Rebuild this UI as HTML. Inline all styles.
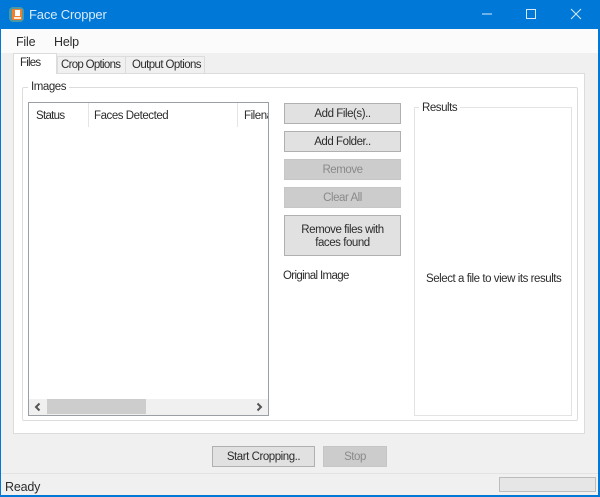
<!DOCTYPE html>
<html>
<head>
<meta charset="utf-8">
<style>
html,body{margin:0;padding:0;}
body{width:600px;height:497px;position:relative;overflow:hidden;background:#f0f0f0;font-family:"Liberation Sans",sans-serif;font-size:11.5px;letter-spacing:-.45px;color:#2c2c2c;filter:blur(.3px);}
div{position:absolute;box-sizing:border-box;}
.t{white-space:nowrap;line-height:14px;}
.btn{background:#e1e1e1;border:1px solid #b0b0b0;text-align:center;color:#2c2c2c;white-space:nowrap;}
.dis{background:#ccc;border:1px solid #c6c6c6;color:#8a8a8a;}
.m{font-size:12.5px;letter-spacing:-.2px;}
</style>
</head>
<body>
<div style="left:0;top:0;width:600px;height:29px;background:#0078d7"></div>
<div style="left:0;top:0;width:1px;height:497px;background:#0078d7"></div>
<div style="left:598px;top:0;width:2px;height:497px;background:#0078d7"></div>
<div style="left:0;top:495px;width:600px;height:2px;background:#0078d7"></div>

<svg style="position:absolute;left:8px;top:6px" width="18" height="18" viewBox="0 0 18 18">
<rect x="1" y="1" width="15" height="15" rx="4" fill="#4a98a6"/>
<rect x="4" y="3" width="10" height="11" rx="1" fill="#f08030"/>
<rect x="7" y="4" width="5" height="6" fill="#fff"/>
<rect x="6" y="11" width="7" height="2" fill="#fde8d8"/>
</svg>
<div class="t" style="left:29px;top:7px;font-size:13px;line-height:16px;color:#d8ebfa;letter-spacing:-.15px">Face Cropper</div>

<svg style="position:absolute;left:480px;top:6px" width="110" height="16" viewBox="0 0 110 16" fill="none" stroke="#d8eafa" stroke-width="1">
<path d="M2 8h10"/>
<rect x="46.5" y="3.5" width="9" height="9"/>
<path d="M91 3l10 10M101 3L91 13"/>
</svg>

<div style="left:1px;top:29px;width:597px;height:24px;background:#fbfbfb"></div>
<div class="t m" style="left:16px;top:35px">File</div>
<div class="t m" style="left:54px;top:35px">Help</div>

<div style="left:13px;top:73px;width:572px;height:361px;background:#fff;border:1px solid #dcdcdc"></div>
<div style="left:57px;top:56px;width:69px;height:18px;background:#f0f0f0;border:1px solid #dcdcdc"></div>
<div style="left:125px;top:56px;width:80px;height:18px;background:#f0f0f0;border:1px solid #dcdcdc"></div>
<div style="left:13px;top:53px;width:44px;height:21px;background:#fff;border:1px solid #dcdcdc;border-bottom:0"></div>
<div class="t" style="left:20px;top:56px;letter-spacing:-.8px">Files</div>
<div class="t" style="left:61px;top:58px;letter-spacing:-.7px">Crop Options</div>
<div class="t" style="left:132px;top:58px;letter-spacing:-.6px">Output Options</div>

<div style="left:22px;top:87px;width:556px;height:334px;border:1px solid #dcdcdc;border-radius:2px"></div>
<div class="t" style="left:28px;top:80px;background:#fff;padding:0 3px">Images</div>

<div style="left:28px;top:102px;width:241px;height:314px;background:#fff;border:1px solid #9a9ea5;overflow:hidden">
<div style="left:59px;top:0;width:1px;height:24px;background:#e5e5e5"></div>
<div style="left:208px;top:0;width:1px;height:24px;background:#e5e5e5"></div>
<div class="t" style="left:7px;top:6px;letter-spacing:-.7px">Status</div>
<div class="t" style="left:65px;top:6px">Faces Detected</div>
<div class="t" style="left:215px;top:6px">Filename</div>
<div style="left:0;top:296px;width:239px;height:16px;background:#f0f0f0"></div>
<div style="left:18px;top:296px;width:99px;height:15px;background:#cdcdcd"></div>
<svg style="position:absolute;left:4px;top:299px" width="232" height="10" viewBox="0 0 232 10" fill="none" stroke="#555" stroke-width="2">
<path d="M6.5 1.5L3 5L6.5 8.5"/><path d="M224.5 1.5L228 5L224.5 8.5"/>
</svg>
</div>

<div class="btn" style="left:284px;top:103px;width:117px;height:21px;line-height:21px">Add File(s)..</div>
<div class="btn" style="left:284px;top:131px;width:117px;height:21px;line-height:21px">Add Folder..</div>
<div class="btn dis" style="left:284px;top:159px;width:117px;height:21px;line-height:20px">Remove</div>
<div class="btn dis" style="left:284px;top:187px;width:117px;height:21px;line-height:20px">Clear All</div>
<div class="btn" style="left:284px;top:215px;width:117px;height:41px;line-height:13px;padding-top:8px">Remove files with<br>faces found</div>
<div class="t" style="left:283px;top:269px;letter-spacing:-.65px">Original Image</div>

<div style="left:414px;top:107px;width:158px;height:309px;border:1px solid #e3e3e3"></div>
<div class="t" style="left:419px;top:101px;background:#fff;padding:0 3px">Results</div>
<div class="t" style="left:426px;top:272px">Select a file to view its results</div>

<div class="btn" style="left:212px;top:446px;width:103px;height:21px;line-height:21px">Start Cropping..</div>
<div class="btn dis" style="left:323px;top:446px;width:64px;height:21px;line-height:21px">Stop</div>

<div style="left:1px;top:473px;width:597px;height:1px;background:#e3e3e3"></div>
<div class="t m" style="left:5px;top:480px">Ready</div>
<div style="left:499px;top:477px;width:97px;height:15px;background:#e6e6e6;border:1px solid #bcbcbc"></div>
</body>
</html>
